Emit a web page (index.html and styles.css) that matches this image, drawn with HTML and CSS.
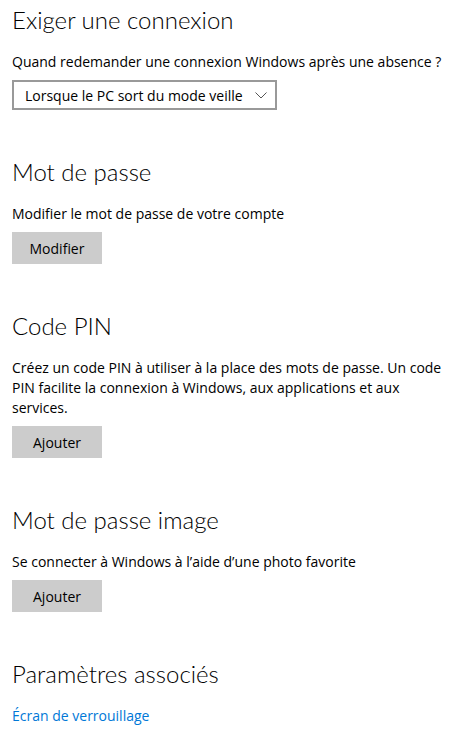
FILE: index.html
```html
<!DOCTYPE html>
<html lang="fr">

<head>
    <meta charset="utf-8">
    <link rel="stylesheet" href="styles.css">
</head>

<body>
    <main class="settings">
        <section class="group">
            <h2 class="group-title">Exiger une connexion</h2>
            <p class="group-text">Quand redemander une connexion Windows après une absence ?</p>
            <div class="select">
                <span class="select-value">Lorsque le PC sort du mode veille</span>
                <svg class="select-chevron" width="12" height="7" viewBox="0 0 12 7">
                    <path d="M0.5 0.5 L6 6 L11.5 0.5" fill="none" stroke="#555" stroke-width="1"/>
                </svg>
            </div>
        </section>

        <section class="group">
            <h2 class="group-title">Mot de passe</h2>
            <p class="group-text">Modifier le mot de passe de votre compte</p>
            <button class="btn">Modifier</button>
        </section>

        <section class="group">
            <h2 class="group-title">Code PIN</h2>
            <p class="group-text">Créez un code PIN à utiliser à la place des mots de passe. Un code PIN facilite la connexion à Windows, aux applications et aux services.</p>
            <button class="btn">Ajouter</button>
        </section>

        <section class="group">
            <h2 class="group-title">Mot de passe image</h2>
            <p class="group-text">Se connecter à Windows à l’aide d’une photo favorite</p>
            <button class="btn">Ajouter</button>
        </section>

        <section class="group">
            <h2 class="group-title">Paramètres associés</h2>
            <a class="link" href="#">Écran de verrouillage</a>
        </section>
    </main>
</body>
</html>
```

FILE: styles.css
```css
body {
    margin: 0;
    background: #fff;
    color: #000;
    font-family: "Open Sans", "Noto Sans", sans-serif;
}

.settings {
    padding: 4px 12px 0;
}

.group {
    display: flex;
    flex-direction: column;
    align-items: flex-start;
    margin-bottom: 46px;
}

.group:last-child {
    margin-bottom: 0;
}

.group-title {
    margin: 0 0 16px;
    font-family: Lato, "Open Sans", sans-serif;
    font-size: 24px;
    font-weight: 300;
    line-height: 32px;
}

.group-text {
    margin: 0 0 8px;
    font-size: 14px;
    line-height: 20px;
}

.select {
    box-sizing: border-box;
    display: flex;
    align-items: center;
    justify-content: space-between;
    width: 265px;
    height: 30px;
    padding: 0 8px 0 11px;
    border: 2px solid #999;
    font-size: 14px;
}

.btn {
    width: 90px;
    height: 32px;
    border: 0;
    background: #ccc;
    color: #000;
    font-family: inherit;
    font-size: 14px;
    padding: 0;
}

.link {
    color: #0078d7;
    font-size: 14px;
    line-height: 20px;
    text-decoration: none;
}
```
